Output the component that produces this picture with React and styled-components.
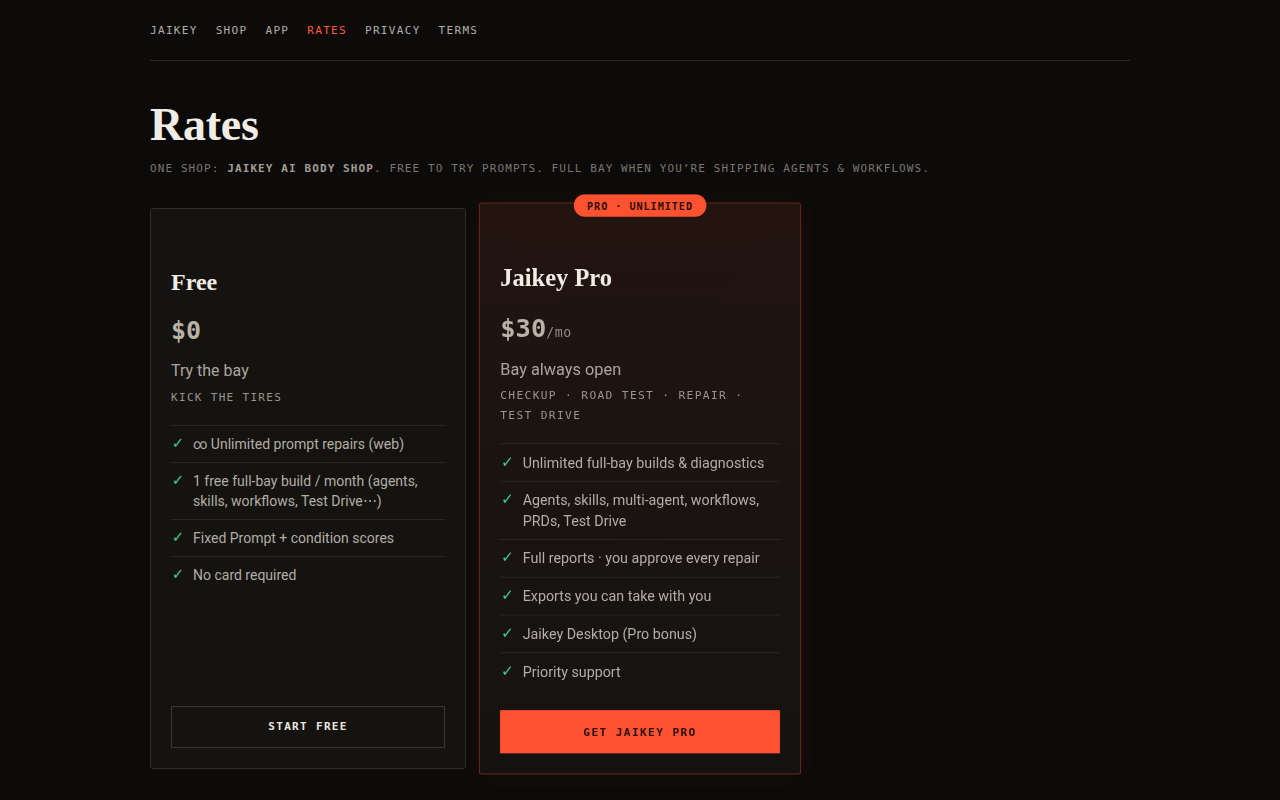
import styled, { createGlobalStyle } from "styled-components";

const GlobalStyle = createGlobalStyle`
  html, body {
    margin: 0;
    padding: 0;
    background: #0c0b0a;
  }
  body {
    font-family: "Roboto", "Noto Sans", sans-serif;
    color: #b5afa5;
    -webkit-font-smoothing: antialiased;
  }
`;

const mono = `"DejaVu Sans Mono", "Liberation Mono", monospace`;
const serif = `"Liberation Serif", "DejaVu Serif", serif`;

const navLinks = ["JAIKEY", "SHOP", "APP", "RATES", "PRIVACY", "TERMS"];

const plans = [
  {
    name: "Free",
    price: "$0",
    unit: null,
    tagline: "Try the bay",
    kicker: "KICK THE TIRES",
    features: [
      "∞ Unlimited prompt repairs (web)",
      "1 free full-bay build / month (agents, skills, workflows, Test Drive⋯)",
      "Fixed Prompt + condition scores",
      "No card required",
    ],
    cta: "START FREE",
    featured: false,
  },
  {
    name: "Jaikey Pro",
    price: "$30",
    unit: "/mo",
    tagline: "Bay always open",
    kicker: "CHECKUP · ROAD TEST · REPAIR · TEST DRIVE",
    features: [
      "Unlimited full-bay builds & diagnostics",
      "Agents, skills, multi-agent, workflows, PRDs, Test Drive",
      "Full reports · you approve every repair",
      "Exports you can take with you",
      "Jaikey Desktop (Pro bonus)",
      "Priority support",
    ],
    cta: "GET JAIKEY PRO",
    featured: true,
    badge: "PRO · UNLIMITED",
  },
];

const App = () => {
  return (
    <>
      <GlobalStyle />
      <Page>
        <Nav>
          {navLinks.map((link) => (
            <NavLink key={link} $active={link === "RATES"}>
              {link}
            </NavLink>
          ))}
        </Nav>

        <Title>Rates</Title>
        <Subtitle>
          ONE SHOP: <strong>JAIKEY AI BODY SHOP</strong>. FREE TO TRY PROMPTS.
          FULL BAY WHEN YOU’RE SHIPPING AGENTS &amp; WORKFLOWS.
        </Subtitle>

        <Grid>
          {plans.map((plan) => (
            <Card key={plan.name} $featured={plan.featured}>
              {plan.badge ? <Badge>{plan.badge}</Badge> : null}
              <PlanName>{plan.name}</PlanName>
              <Price>
                {plan.price}
                {plan.unit ? <Unit>{plan.unit}</Unit> : null}
              </Price>
              <Tagline>{plan.tagline}</Tagline>
              <Kicker>{plan.kicker}</Kicker>
              <Features>
                {plan.features.map((feature) => (
                  <Feature key={feature}>
                    <Check>✓</Check>
                    <span>{feature}</span>
                  </Feature>
                ))}
              </Features>
              <CtaButton $featured={plan.featured}>{plan.cta}</CtaButton>
            </Card>
          ))}
        </Grid>
      </Page>
    </>
  );
};

const Page = styled.div`
  max-width: 980px;
  margin: 0 auto;
  padding-bottom: 40px;
`;

const Nav = styled.nav`
  display: flex;
  gap: 18px;
  padding: 24px 0 22px;
  border-bottom: 1px solid #2b2926;
`;

const NavLink = styled.a`
  font-family: ${mono};
  font-size: 11px;
  line-height: 14px;
  letter-spacing: 0.12em;
  color: ${(props) => (props.$active ? "#ff5a3c" : "#b4afa6")};
  cursor: pointer;
`;

const Title = styled.h1`
  font-family: ${serif};
  font-weight: 700;
  font-size: 46px;
  line-height: 1.1;
  letter-spacing: -0.005em;
  color: #f1ede5;
  margin: 39px 0 0;
`;

const Subtitle = styled.p`
  font-family: ${mono};
  font-size: 11px;
  line-height: 16px;
  letter-spacing: 0.1em;
  color: #7b766e;
  margin: 10px 0 0;
  strong {
    color: #a39d93;
    font-weight: 700;
  }
`;

const Grid = styled.div`
  display: grid;
  grid-template-columns: repeat(3, 1fr);
  gap: 16px;
  align-items: stretch;
  margin-top: 31px;
`;

const Card = styled.div`
  position: relative;
  display: flex;
  flex-direction: column;
  padding: 59px 20px 20px;
  border-radius: 3px;
  border: 1px solid ${(props) => (props.$featured ? "#6b2a1b" : "#2f2d29")};
  background: ${(props) =>
    props.$featured
      ? "linear-gradient(180deg, #241410 0%, #1a1411 45%, #151311 100%)"
      : "#141310"};
  transform: ${(props) => (props.$featured ? "scale(1.02)" : "none")};
  box-shadow: ${(props) =>
    props.$featured ? "0 0 24px rgba(255, 82, 48, 0.06)" : "none"};
`;

const Badge = styled.span`
  position: absolute;
  top: -9px;
  left: 50%;
  transform: translateX(-50%);
  height: 22px;
  padding: 0 13px;
  display: flex;
  align-items: center;
  border-radius: 11px;
  background: #ff5230;
  color: #2a0e07;
  font-family: ${mono};
  font-weight: 700;
  font-size: 10px;
  letter-spacing: 0.09em;
  white-space: nowrap;
`;

const PlanName = styled.h3`
  font-family: ${serif};
  font-weight: 700;
  font-size: 24px;
  line-height: 1.2;
  color: #f1ede5;
  margin: 0;
`;

const Price = styled.div`
  font-family: ${mono};
  font-weight: 700;
  font-size: 25px;
  line-height: 1.2;
  color: #b8b2a7;
  margin-top: 20px;
`;

const Unit = styled.span`
  font-size: 13px;
  font-weight: 400;
  letter-spacing: 0.04em;
  color: #8f8a81;
`;

const Tagline = styled.div`
  font-size: 16px;
  line-height: 1.4;
  color: #aca69c;
  margin-top: 14px;
`;

const Kicker = styled.div`
  font-family: ${mono};
  font-size: 11px;
  line-height: 18.6px;
  letter-spacing: 0.12em;
  color: #9a958c;
  margin-top: 6px;
`;

const Features = styled.ul`
  list-style: none;
  padding: 0;
  margin: 18px 0 20px;
`;

const Feature = styled.li`
  display: flex;
  gap: 8px;
  padding: 8px 0;
  border-top: 1px solid #2a2824;
  font-size: 14px;
  line-height: 20px;
  color: #b3ada3;
`;

const Check = styled.span`
  flex: 0 0 14px;
  color: #45c98b;
  font-family: "DejaVu Sans", sans-serif;
  font-size: 15px;
  line-height: 18px;
  text-align: center;
`;

const CtaButton = styled.button`
  margin-top: auto;
  height: 42px;
  width: 100%;
  font-family: ${mono};
  font-weight: 700;
  font-size: 11px;
  letter-spacing: 0.12em;
  cursor: pointer;
  border-radius: 0;
  border: 1px solid ${(props) => (props.$featured ? "#ff5230" : "#3b3832")};
  background: ${(props) => (props.$featured ? "#ff5230" : "transparent")};
  color: ${(props) => (props.$featured ? "#2a0e07" : "#ece8e0")};
`;

export default App;
